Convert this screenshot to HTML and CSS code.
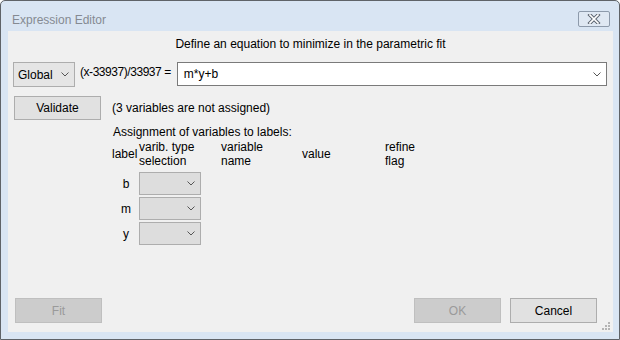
FILE: index.html
```html
<!DOCTYPE html>
<html lang="en">
<head>
  <meta charset="UTF-8" />
  <title>Expression Editor</title>
  <link rel="stylesheet" href="styles.css">
</head>
<body>

<div class="window">
  <div class="titlebar">
    <span class="title">Expression Editor</span>
    <button class="close-button">
      <svg width="14" height="10" viewBox="0 0 14 10">
        <path d="M3 1 L11 9 M11 1 L3 9" stroke="#5c6470" stroke-width="3.6" stroke-linecap="square" />
        <path d="M3 1 L11 9 M11 1 L3 9" stroke="#fff" stroke-width="1.7" stroke-linecap="square" />
      </svg>
    </button>
  </div>

  <div class="client">
    <p class="heading">Define an equation to minimize in the parametric fit</p>

    <!-- Equation -->
    <div class="eq-row">
      <div class="select scope">
        <span>Global</span>
        <svg class="chevron" width="8" height="5" viewBox="0 0 8 5"><polyline points="0.5,0.5 4,4 7.5,0.5" /></svg>
      </div>
      <span class="eq-prefix">(x-33937)/33937 =</span>
      <div class="combo">
        <span>m*y+b</span>
        <svg class="chevron" width="8" height="5" viewBox="0 0 8 5"><polyline points="0.5,0.5 4,4 7.5,0.5" /></svg>
      </div>
    </div>

    <div class="validate-row">
      <button class="btn">Validate</button>
      <span class="status">(3 variables are not assigned)</span>
    </div>

    <!-- Variable assignment -->
    <div class="assign">
      <p class="assign-title">Assignment of variables to labels:</p>
      <div class="var-grid">
        <span class="head">label</span>
        <span class="head">varib. type<br>selection</span>
        <span class="head">variable<br>name</span>
        <span class="head">value</span>
        <span class="head">refine<br>flag</span>

        <span class="var-label">b</span>
        <div class="select type-select">
          <svg class="chevron" width="8" height="5" viewBox="0 0 8 5"><polyline points="0.5,0.5 4,4 7.5,0.5" /></svg>
        </div>
        <span></span><span></span><span></span>

        <span class="var-label">m</span>
        <div class="select type-select">
          <svg class="chevron" width="8" height="5" viewBox="0 0 8 5"><polyline points="0.5,0.5 4,4 7.5,0.5" /></svg>
        </div>
        <span></span><span></span><span></span>

        <span class="var-label">y</span>
        <div class="select type-select">
          <svg class="chevron" width="8" height="5" viewBox="0 0 8 5"><polyline points="0.5,0.5 4,4 7.5,0.5" /></svg>
        </div>
        <span></span><span></span><span></span>
      </div>
    </div>

    <div class="footer">
      <button class="btn" disabled>Fit</button>
      <span class="spacer"></span>
      <button class="btn" disabled>OK</button>
      <button class="btn">Cancel</button>
    </div>

    <svg class="grip" width="8" height="8" viewBox="0 0 8 8">
      <rect x="6" y="0" width="2" height="2" />
      <rect x="3" y="3" width="2" height="2" />
      <rect x="6" y="3" width="2" height="2" />
      <rect x="0" y="6" width="2" height="2" />
      <rect x="3" y="6" width="2" height="2" />
      <rect x="6" y="6" width="2" height="2" />
    </svg>
  </div>
</div>

</body>
</html>
```

FILE: styles.css
```css
body {
  margin: 0;
  font-family: "Segoe UI", "Liberation Sans", sans-serif;
  font-size: 12px;
  color: #000;
  background: #fff;
}

.window {
  width: 620px;
  height: 340px;
  box-sizing: border-box;
  border: 1px solid #5f6368;
  border-radius: 5px 5px 0 0;
  background-color: #d9e5f3;
  display: flex;
  flex-direction: column;
}

.titlebar {
  height: 30px;
  display: flex;
  align-items: flex-start;
  justify-content: space-between;
  padding: 0 9px 0 11px;
}

.title {
  margin-top: 11px;
  line-height: 16px;
  color: #858a92;
}

.close-button {
  margin-top: 10px;
  width: 32px;
  height: 16px;
  padding: 0;
  border: 1px solid #8d9aab;
  border-radius: 2px;
  background: #dfe8f3;
  display: flex;
  align-items: center;
  justify-content: center;
}

.client {
  flex: 1;
  margin: 0 6px 7px 7px;
  background-color: #f0f0f0;
  display: flex;
  flex-direction: column;
  position: relative;
}

.heading {
  margin: 5px 0 0;
  line-height: 16px;
  text-align: center;
}

/* equation row */
.eq-row {
  display: flex;
  align-items: flex-start;
  margin-top: 10px;
  padding: 0 6px 0 5px;
}

.select {
  box-sizing: border-box;
  border: 1px solid #adadad;
  background: #e5e5e5;
  display: flex;
  align-items: center;
  justify-content: space-between;
}

.chevron polyline {
  fill: none;
  stroke: #555;
  stroke-width: 1;
}

.scope {
  width: 62px;
  height: 25px;
  padding: 0 5px 0 4px;
}

.eq-prefix {
  margin: 2px 6px 0 5px;
  line-height: 16px;
  letter-spacing: -0.45px;
}

.combo {
  flex: 1;
  height: 24px;
  box-sizing: border-box;
  border: 1px solid #7a7a7a;
  background: #fff;
  display: flex;
  align-items: center;
  justify-content: space-between;
  padding: 0 5px 0 6px;
}

/* validate */
.validate-row {
  display: flex;
  align-items: center;
  margin-top: 9px;
  padding-left: 6px;
}

.btn {
  width: 87px;
  height: 24px;
  box-sizing: border-box;
  border: 1px solid #adadad;
  background: #e1e1e1;
  font-family: inherit;
  font-size: 12px;
  color: #000;
  padding: 0;
}

.btn:disabled {
  background: #cccccc;
  border-color: #bfbfbf;
  color: #9a9a9a;
}

.status {
  margin-left: 11px;
}

/* assignment table */
.assign {
  padding-left: 104px;
}

.assign-title {
  margin: 4px 0 0 1px;
  line-height: 16px;
}

.var-grid {
  display: grid;
  grid-template-columns: 27px 82px 81px 83px auto;
  row-gap: 2px;
  align-items: center;
}

.head {
  line-height: 14px;
  margin-bottom: 2px;
}

.var-label {
  text-align: center;
  padding-left: 1px;
}

.type-select {
  width: 62px;
  height: 23px;
  background: #dddddd;
  justify-content: flex-end;
  padding-right: 5px;
}

/* footer */
.footer {
  margin-top: auto;
  margin-bottom: 9px;
  display: flex;
  gap: 9px;
  padding: 0 16px 0 7px;
}

.footer .btn {
  height: 25px;
}

.spacer {
  flex: 1;
}

.grip {
  position: absolute;
  right: 3px;
  bottom: 2px;
  fill: #b4b4b4;
}
```
